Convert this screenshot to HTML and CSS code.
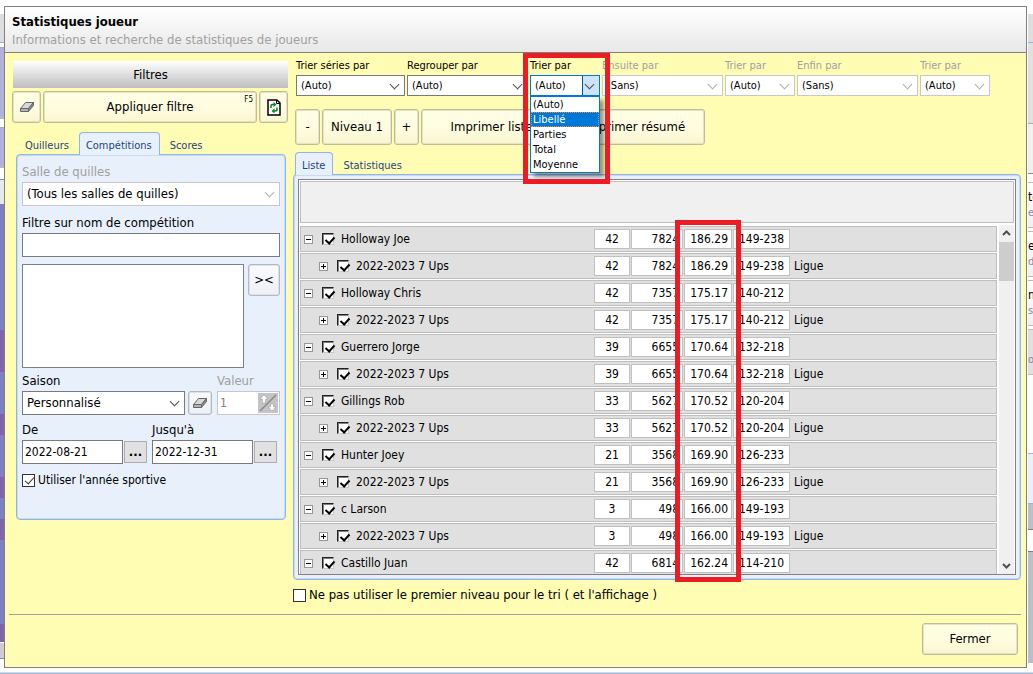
FILE: index.html
```html
<!DOCTYPE html>
<html lang="fr">
<head>
    <meta charset="UTF-8">
    <meta name="viewport" content="width=device-width, initial-scale=1.0">
    <title>Statistiques joueur</title>
    <link rel="stylesheet" href="styles.css">
</head>
<body>
    <svg class="defs" width="0" height="0">
        <symbol id="eraser" viewBox="0 0 16 12">
            <path d="M1.500 7.500L6.500 1.500H14.500L9.500 7.500Z" fill="#d8d8d8" stroke="#666"/>
            <path d="M1.500 7.500H9.500V10.500H1.500Z" fill="#b4b4b4" stroke="#666"/>
            <path d="M9.500 7.500L14.500 1.500V4.500L9.500 10.500Z" fill="#8c8c8c" stroke="#666"/>
        </symbol>
    </svg>

    <div class="screen">
        <div class="strip strip-left">
            <div class="band-top"></div>
            <div class="band-card"></div>
            <div class="band-card small"></div>
            <div class="band-bar"></div>
            <div class="band-lanes"></div>
            <div class="band-foot"></div>
        </div>

        <main class="dialog">
            <header class="dialog-header">
                <h1>Statistiques joueur</h1>
                <p>Informations et recherche de statistiques de joueurs</p>
            </header>

            <div class="content">
                <aside class="sidebar">
                    <h2>Filtres</h2>
                    <div class="filter-actions">
                        <button class="btn" aria-label="Effacer"><svg width="16" height="12"><use href="#eraser"/></svg></button>
                        <button class="btn apply">Appliquer filtre<kbd>F5</kbd></button>
                        <button class="btn" aria-label="Actualiser">
                            <svg width="14" height="17" viewBox="0 0 14 17">
                                <path d="M1 1H10L13 4V16H1Z" fill="#fff" stroke="#000" stroke-width="1.500"/>
                                <path d="M9.500 1V4.500H13" fill="none" stroke="#000"/>
                                <path d="M4 9V7Q4 5.500 6 5.500H7M10 8.500V10.500Q10 12 8 12H7" fill="none" stroke="#008a10" stroke-width="1.500"/>
                                <path d="M6.500 3L9.500 5.500L6.500 8ZM7.500 9.500L4.500 12L7.500 14.500Z" fill="#008a10"/>
                            </svg>
                        </button>
                    </div>

                    <nav class="tabs side-tabs">
                        <a href="#">Quilleurs</a>
                        <a href="#" class="active">Compétitions</a>
                        <a href="#">Scores</a>
                    </nav>
                    <section class="panel side-panel">
                        <div class="field off">
                            <label for="salle">Salle de quilles</label>
                            <div class="combo"><select id="salle"><option>(Tous les salles de quilles)</option></select></div>
                        </div>
                        <div class="field">
                            <label for="nom">Filtre sur nom de compétition</label>
                            <input type="text" id="nom">
                        </div>
                        <div class="row names">
                            <textarea aria-label="Compétitions"></textarea>
                            <button class="btn cold">&gt;&lt;</button>
                        </div>
                        <div class="row season">
                            <div class="field grow">
                                <label for="saison">Saison</label>
                                <div class="combo"><select id="saison"><option>Personnalisé</option></select></div>
                            </div>
                            <button class="btn cold" aria-label="Effacer la saison"><svg width="16" height="12"><use href="#eraser"/></svg></button>
                            <div class="field off spin">
                                <label for="valeur">Valeur</label>
                                <div class="spin-box">
                                    <input type="text" id="valeur" value="1" disabled>
                                    <svg width="20" height="20" viewBox="0 0 20 20">
                                        <rect width="20" height="20" fill="#c4c4c4"/>
                                        <path d="M2 18L18 2" stroke="#888" stroke-width="1.500"/>
                                        <path d="M6 2L10 6H7.500V10H4.500V6H2Z M14 18L10 14H12.500V11H15.500V14H18Z" fill="#fff" stroke="#999" stroke-width=".5"/>
                                    </svg>
                                </div>
                            </div>
                        </div>
                        <div class="row dates">
                            <div class="field">
                                <label for="de">De</label>
                                <input type="text" id="de" value="2022-08-21">
                            </div>
                            <button class="more">...</button>
                            <div class="field second">
                                <label for="jusqua">Jusqu'à</label>
                                <input type="text" id="jusqua" value="2022-12-31">
                            </div>
                            <button class="more">...</button>
                        </div>
                        <label class="check"><input type="checkbox" checked>Utiliser l'année sportive</label>
                    </section>
                </aside>

                <section class="main">
                    <div class="sorts">
                        <div class="field w-series">
                            <label for="series">Trier séries par</label>
                            <div class="combo"><select id="series"><option>(Auto)</option></select></div>
                        </div>
                        <div class="field w-long">
                            <label for="regrouper">Regrouper par</label>
                            <div class="combo"><select id="regrouper"><option>(Auto)</option></select></div>
                        </div>
                        <div class="field w-short open">
                            <label for="tri1">Trier par</label>
                            <div class="combo"><select id="tri1"><option>(Auto)</option></select></div>
                            <ul class="menu" role="listbox">
                                <li role="option">(Auto)</li>
                                <li role="option" class="selected" aria-selected="true">Libellé</li>
                                <li role="option">Parties</li>
                                <li role="option">Total</li>
                                <li role="option">Moyenne</li>
                            </ul>
                            <div class="mark mark-menu"></div>
                        </div>
                        <div class="field w-long off">
                            <label for="ensuite">Ensuite par</label>
                            <div class="combo"><select id="ensuite"><option>(Sans)</option></select></div>
                        </div>
                        <div class="field w-short off">
                            <label for="tri2">Trier par</label>
                            <div class="combo"><select id="tri2"><option>(Auto)</option></select></div>
                        </div>
                        <div class="field w-long off">
                            <label for="enfin">Enfin par</label>
                            <div class="combo"><select id="enfin"><option>(Sans)</option></select></div>
                        </div>
                        <div class="field w-short off">
                            <label for="tri3">Trier par</label>
                            <div class="combo"><select id="tri3"><option>(Auto)</option></select></div>
                        </div>
                    </div>

                    <div class="toolbar">
                        <button class="btn tiny">-</button>
                        <button class="btn level">Niveau 1</button>
                        <button class="btn tiny">+</button>
                        <button class="btn print">Imprimer liste</button>
                        <button class="btn print">Imprimer résumé</button>
                    </div>

                    <nav class="tabs main-tabs">
                        <a href="#" class="active">Liste</a>
                        <a href="#">Statistiques</a>
                    </nav>
                    <section class="panel list-panel">
                        <div class="list">
                            <div class="list-header"></div>
                            <div class="list-body">
                                <div class="rows">
                                    <table>
                                        <colgroup>
                                            <col class="col-name"><col class="col-games"><col class="col-total">
                                            <col class="col-average"><col class="col-range"><col>
                                        </colgroup>
                                        <tbody id="players"></tbody>
                                    </table>
                                </div>
                                <div class="scrollbar">
                                    <svg width="15" height="16" viewBox="0 0 15 16"><path d="M4 10L7.500 6.500L11 10" fill="none" stroke="#505050" stroke-width="2"/></svg>
                                    <div class="thumb"></div>
                                    <svg width="15" height="16" viewBox="0 0 15 16"><path d="M4 6L7.500 9.500L11 6" fill="none" stroke="#505050" stroke-width="2"/></svg>
                                </div>
                            </div>
                            <div class="mark mark-average"></div>
                        </div>
                    </section>
                    <label class="check below"><input type="checkbox">Ne pas utiliser le premier niveau pour le tri ( et l'affichage )</label>
                </section>
            </div>

            <footer class="dialog-footer">
                <button class="btn">Fermer</button>
            </footer>
        </main>

        <div class="strip strip-right">
            <div class="band-top"></div>
            <div class="band-grey"></div>
            <div class="band-light"></div>
            <div class="card"><b>te</b><i>em</i></div>
            <div class="card"><b>e</b><i>da</i></div>
            <div class="card"><b>nt</b><i>siè</i></div>
            <div class="card grey"><b></b><i>oz</i></div>
            <div class="band-white"></div>
            <div class="band-blue"></div>
            <div class="band-slate"></div>
            <div class="band-gap"></div>
            <div class="band-slate grow"></div>
        </div>
    </div>

    <script>
        const competition = '2022-2023 7 Ups';
        const players = [
            { name: 'Holloway Joe', games: 42, total: 7824, average: '186.29', range: '149-238' },
            { name: 'Holloway Chris', games: 42, total: 7357, average: '175.17', range: '140-212' },
            { name: 'Guerrero Jorge', games: 39, total: 6655, average: '170.64', range: '132-218' },
            { name: 'Gillings Rob', games: 33, total: 5627, average: '170.52', range: '120-204' },
            { name: 'Hunter Joey', games: 21, total: 3568, average: '169.90', range: '126-233' },
            { name: 'c Larson', games: 3, total: 498, average: '166.00', range: '149-193' },
            { name: 'Castillo Juan', games: 42, total: 6814, average: '162.24', range: '114-210' }
        ];

        function rowHtml(player, child) {
            return `
                <tr class="${child ? 'child' : ''}">
                    <td>
                        <div class="name">
                            <button class="toggle ${child ? 'plus' : ''}" aria-label="${child ? 'Ouvrir' : 'Fermer'}"></button>
                            <label><input type="checkbox" checked>${child ? competition : player.name}</label>
                        </div>
                    </td>
                    <td><span class="value center">${player.games}</span></td>
                    <td><span class="value">${player.total}</span></td>
                    <td><span class="value">${player.average}</span></td>
                    <td><span class="value center">${player.range}</span></td>
                    <td>${child ? 'Ligue' : ''}</td>
                </tr>
            `;
        }

        function renderPlayers() {
            const last = players.length - 1;
            document.getElementById('players').innerHTML = players
                .map((player, index) => rowHtml(player, false) + (index < last ? rowHtml(player, true) : ''))
                .join('');
        }

        renderPlayers();
    </script>
</body>
</html>
```

FILE: styles.css
```css
* {
    box-sizing: border-box;
}

body {
    margin: 0;
    background: white;
    color: black;
    font-family: Tahoma, "DejaVu Sans Condensed", "DejaVu Sans", sans-serif;
    font-size: 12px;
    line-height: 16px;
}

button, input, select, textarea {
    margin: 0;
    font: inherit;
    color: inherit;
}

.defs {
    position: absolute;
}

h1, h2, p, ul {
    margin: 0;
    padding: 0;
}

.screen {
    display: grid;
    grid-template-columns: 4px 1fr 5px;
    grid-template-rows: minmax(0, 1fr);
    height: 100vh;
    min-height: 600px;
    border-bottom: 1px solid #9db9e6;
    box-shadow: inset 0 -1px #d8d8d8;
}

/* window behind the dialog */
.strip {
    display: flex;
    flex-direction: column;
    padding: 14px 0 10px;
    overflow: hidden;
}

.strip > div {
    flex: none;
}

.band-top {
    height: 29px;
    background: #dedede;
    border-bottom: 1px solid #90b4e8;
}

.band-card {
    height: 72px;
    margin-top: 4px;
    background: #b0b0d8;
    border-top: 1px solid #aaa;
    border-bottom: 2px solid #bbb;
}

.band-card.small {
    height: 41px;
    margin-top: 8px;
}

.band-bar {
    height: 36px;
    background: linear-gradient(white 11px, #888 11px, #888 12px, #e8e8e8 12px);
}

.strip > .band-lanes {
    flex: 1;
    background: linear-gradient(
        #8080c0 126px, #8064a8 126px, #8064a8 168px,
        #8080c0 168px, #8080c0 210px, #8064a8 210px, #8064a8 231px,
        #8080c0 231px, #8080c0 273px, #8064a8 273px, #8064a8 294px,
        #8080c0 294px, #8080c0 315px, #8064a8 315px, #8064a8 336px,
        #8080c0 336px, #8080c0 420px, #8064a8 420px);
}

.strip-left {
    padding-bottom: 14px;
}

.band-foot {
    height: 17px;
    background: #ccc;
    border-top: 1px solid white;
    border-bottom: 1px solid #888;
}

.band-grey {
    height: 81px;
    background: #e0e0e0;
    border-bottom: 1px solid #aaa;
}

.band-light {
    height: 50px;
    margin-bottom: 8px;
    background: #f0f0f0;
    border-bottom: 1px solid #888;
}

.card {
    height: 46px;
    margin-bottom: 3px;
    padding-top: 6px;
    border: solid #bbb;
    border-width: 1px 0;
    background: linear-gradient(white, #f0f0f0);
    white-space: nowrap;
}

.card.grey {
    background: #e0e0e0;
}

.card b, .card i {
    display: block;
    height: 16px;
    font-style: normal;
    font-weight: normal;
}

.card i {
    color: #8888a8;
    font-size: 11px;
}

.band-white {
    height: 75px;
}

.band-blue {
    height: 51px;
    background: #e8f0fb;
    border: solid #90b4e8;
    border-width: 1px 0;
}

.band-slate {
    height: 26px;
    background: #b8c0c8;
    border-bottom: 1px solid #808080;
}

.band-gap {
    height: 22px;
    border-bottom: 1px solid #808080;
}

.strip > .grow {
    flex: 1;
    border: 0;
}

/* dialog */
.dialog {
    display: flex;
    flex-direction: column;
    min-width: 0;
    margin: 6px 1px 5px 0;
    border: 1px solid #808080;
    background: #fffcb4;
}

.dialog-header {
    padding: 7px 7px 4px;
    border-bottom: 1px solid #808080;
    background: linear-gradient(white, #e8e8e8);
}

.dialog-header h1 {
    font-size: 13px;
    line-height: 16px;
}

.dialog-header p {
    padding-top: 2px;
    color: #a0a0a0;
    font-size: 13px;
    line-height: 16px;
}

.content {
    display: flex;
    flex: 1;
    gap: 5px;
    min-height: 0;
    padding: 0 5px 0 7px;
}

.sidebar {
    flex: 0 0 276px;
    padding-top: 8px;
}

.sidebar h2 {
    height: 27px;
    margin-left: 1px;
    background: linear-gradient(white, #bebebe);
    font-size: 13px;
    font-weight: normal;
    line-height: 27px;
    text-align: center;
}

.btn {
    display: flex;
    align-items: center;
    justify-content: center;
    padding: 0;
    border: 1px solid #bcbc9c;
    border-radius: 3px;
    background: linear-gradient(#fffee4, #fffde0 50%, #f8f6d0);
    box-shadow: inset 0 0 0 1px #e6e4c0;
    font-size: 13px;
}

.btn.cold {
    border-color: #b4b8c0;
    background: linear-gradient(#fafbfd, #ecf0f6);
    box-shadow: inset 0 0 0 1px #dde2e8;
}

.filter-actions {
    display: grid;
    grid-template-columns: 29px 1fr 29px;
    gap: 2px;
    height: 32px;
    margin-top: 3px;
}

.apply {
    position: relative;
}

.apply kbd {
    position: absolute;
    top: 3px;
    right: 3px;
    font-family: inherit;
    font-size: 8px;
    line-height: 10px;
}

/* tabs */
.tabs {
    display: flex;
    position: relative;
    z-index: 1;
    margin-bottom: -1px;
    font-size: 11px;
}

.tabs a {
    height: 23px;
    padding: 5px 9px 0;
    color: #1e4484;
    text-decoration: none;
    line-height: 16px;
    border: 1px solid transparent;
    border-bottom: 0;
    white-space: nowrap;
}

.tabs a.active {
    padding: 5px 7px 0 6px;
    border-color: #90b4e8;
    border-radius: 4px 4px 0 0;
    background: #e8f0fb;
}

.side-tabs {
    margin-top: 9px;
    padding-left: 3px;
}

.main-tabs {
    margin-top: 7px;
    padding-left: 2px;
}

.panel {
    border: 1px solid #90b4e8;
    border-radius: 4px;
    background: #e8f0fb;
    box-shadow: inset 0 0 0 1px #c8daf4;
}

.side-panel {
    height: 366px;
    margin: 0 2px 0 4px;
    padding: 9px 5px;
}

/* form fields */
.field label {
    display: block;
    height: 16px;
    margin-bottom: 2px;
    white-space: nowrap;
}

.side-panel label, .side-panel select {
    font-size: 13px;
}

.field input, .combo {
    display: block;
    width: 100%;
    height: 24px;
    border: 1px solid #7a7a7a;
    border-radius: 0;
    background: white;
}

.field input {
    padding: 0 2px;
}

.combo {
    position: relative;
}

.combo select {
    width: 100%;
    height: 100%;
    padding: 0 16px 0 4px;
    border: 0;
    background: transparent;
    appearance: none;
}

.combo::after {
    content: "";
    position: absolute;
    top: 50%;
    right: 6px;
    width: 6px;
    height: 6px;
    margin-top: -5px;
    border: solid #505050;
    border-width: 0 1px 1px 0;
    transform: rotate(45deg);
    pointer-events: none;
}

.off label {
    color: #a0a0a0;
}

.off .combo, .spin-box {
    border-color: #c8c8c8;
}

.off .combo::after {
    border-color: #b0b0b0;
}

.side-panel > .field + .field {
    margin-top: 9px;
}

.row {
    display: flex;
    align-items: flex-end;
}

.names {
    align-items: flex-start;
    gap: 4px;
    margin-top: 7px;
}

.names textarea {
    flex: 1;
    min-width: 0;
    height: 104px;
    border: 1px solid #7a8088;
    border-radius: 0;
    resize: none;
}

.names .btn {
    width: 32px;
    height: 32px;
}

.season {
    gap: 3px;
    margin-top: 5px;
}

.season .grow {
    flex: 1;
}

.season .btn {
    width: 24px;
    height: 24px;
}

.spin {
    width: 63px;
    margin-left: 2px;
}

.spin-box {
    display: flex;
    align-items: center;
    height: 24px;
    padding-right: 1px;
    border: 1px solid #c8c8c8;
    background: white;
}

.spin-box input {
    flex: 1;
    min-width: 0;
    height: 20px;
    border: 0;
    color: #808080;
}

.spin-box svg {
    flex: none;
}

.dates {
    gap: 1px;
    margin-top: 7px;
}

.dates .field {
    width: 101px;
}

.dates .second {
    margin-left: 4px;
}

.more {
    width: 23px;
    height: 22px;
    margin-bottom: 1px;
    padding: 0;
    border: 1px solid #adadad;
    background: #e1e1e1;
    font-size: 13px;
    font-weight: bold;
    line-height: 16px;
}

.check {
    display: flex;
    align-items: center;
    gap: 3px;
}

.check input {
    position: relative;
    width: 13px;
    height: 13px;
    border: 1px solid #333;
    background: white;
    appearance: none;
}

.check input:checked::after {
    content: "";
    position: absolute;
    top: 0;
    left: 4px;
    width: 4px;
    height: 8px;
    border: solid #333;
    border-width: 0 1px 1px 0;
    transform: rotate(42deg);
}

.side-panel .check {
    margin-top: 8px;
    font-size: 12px;
}

/* right side */
.main {
    display: flex;
    flex: 1;
    flex-direction: column;
    min-width: 0;
    padding-top: 6px;
}

.sorts {
    display: flex;
    gap: 2px;
    padding-left: 3px;
    font-size: 11px;
}

.sorts .field {
    position: relative;
}

.sorts label {
    height: 14px;
    line-height: 14px;
}

.sorts .combo {
    height: 21px;
}

.w-series {
    width: 109px;
}

.w-long {
    width: 121px;
}

.w-short {
    width: 70px;
}

.open .combo {
    border-color: #0078d7;
    background: linear-gradient(to left, #cce4f7 16px, #005499 16px, #005499 17px, white 17px);
}

.menu {
    position: absolute;
    z-index: 2;
    top: 37px;
    left: 0;
    width: 70px;
    border: 1px solid #0078d7;
    background: white;
    box-shadow: 4px 4px 4px rgba(0, 0, 0, 0.4);
    list-style: none;
}

.menu li {
    padding-left: 2px;
    line-height: 15px;
}

.menu .selected {
    outline: 1px dotted #ff8728;
    outline-offset: -1px;
    background: #0078d7;
    color: white;
}

.mark {
    position: absolute;
    z-index: 3;
    border: 5px solid #ed1c24;
    pointer-events: none;
}

.mark-menu {
    top: -6px;
    left: -7px;
    width: 87px;
    height: 131px;
}

.toolbar {
    display: flex;
    gap: 2px;
    height: 36px;
    margin-top: 13px;
    padding-left: 2px;
}

.tiny {
    width: 25px;
}

.level {
    width: 70px;
}

.print {
    width: 141px;
}

.list-panel {
    display: flex;
    flex: 1;
    min-height: 0;
    padding: 4px;
}

.list {
    display: flex;
    position: relative;
    flex: 1;
    flex-direction: column;
    min-width: 0;
    padding: 1px 1px 0;
    border: 1px solid #808080;
    background: white;
}

.list-header {
    flex: none;
    height: 42px;
    border: 1px solid #bebebe;
    background: #f0f0f0;
}

.list-body {
    display: flex;
    flex: 1;
    gap: 2px;
    min-height: 0;
    margin-top: 2px;
}

.rows {
    flex: 1;
    overflow: hidden;
}

table {
    width: 100%;
    border-collapse: separate;
    border-spacing: 0 1px;
    table-layout: fixed;
}

td {
    height: 26px;
    padding: 0 0 0 1px;
    border: solid #bebebe;
    border-width: 1px 0;
    background: #e0e0e0;
}

td:first-child {
    border-left-width: 1px;
}

td:last-child {
    padding-left: 4px;
    border-right-width: 1px;
}

.col-name {
    width: 293px;
}

.col-games {
    width: 37px;
}

.col-total {
    width: 53px;
}

.col-average {
    width: 49px;
}

.col-range {
    width: 58px;
}

.value {
    display: block;
    height: 20px;
    padding-right: 3px;
    border: 1px solid #c0c0c0;
    background: white;
    line-height: 18px;
    text-align: right;
}

.value.center {
    padding: 0;
    text-align: center;
}

.name, .name label {
    display: flex;
    align-items: center;
}

.name {
    padding-left: 2px;
}

.child .name {
    padding-left: 17px;
}

.name label {
    gap: 7px;
}

.toggle {
    width: 9px;
    height: 9px;
    margin-right: 9px;
    padding: 0;
    border: 1px solid #969696;
    background: linear-gradient(black, black) center / 5px 1px no-repeat white;
}

.toggle.plus {
    background: linear-gradient(black, black) center / 5px 1px no-repeat, linear-gradient(black, black) center / 1px 5px no-repeat, white;
}

.name input {
    position: relative;
    width: 12px;
    height: 12px;
    border: 1px solid #202020;
    border-right-color: #c8c8c8;
    border-bottom-color: #c8c8c8;
    background: white;
    box-shadow: inset 1px 1px #808080;
    appearance: none;
}

.name input:checked::after {
    content: "";
    position: absolute;
    top: 1px;
    left: 4px;
    width: 4px;
    height: 7px;
    border: solid black;
    border-width: 0 2px 2px 0;
    transform: rotate(42deg);
}

.scrollbar {
    display: flex;
    flex: none;
    flex-direction: column;
    width: 15px;
    background: #f0f0f0;
}

.thumb {
    height: 39px;
    margin: 1px 0 auto;
    background: #cdcdcd;
}

.mark-average {
    top: 40px;
    right: 274px;
    bottom: -8px;
    width: 66px;
}

.below {
    height: 14px;
    margin: 8px 0 12px;
    font-size: 13px;
}

.dialog-footer {
    display: flex;
    justify-content: flex-end;
    margin: 0 5px 12px 4px;
    padding: 8px 3px 0 0;
    border-top: 1px solid #a0a0a0;
}

.dialog-footer .btn {
    width: 96px;
    height: 32px;
}
```
